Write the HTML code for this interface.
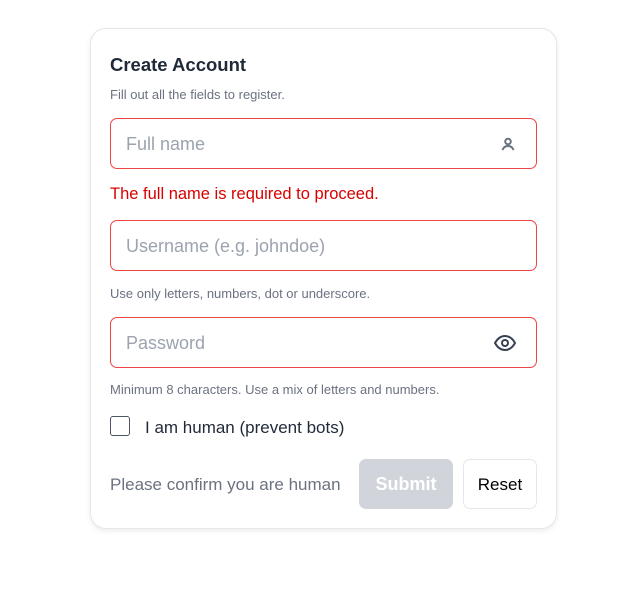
<!DOCTYPE html>
<html><head><style>
*{box-sizing:border-box;margin:0;padding:0}
body{width:619px;height:603px;background:#fff;font-family:"Liberation Sans",sans-serif;position:relative}
.card{position:absolute;left:90px;top:28px;width:467px;height:501px;border:1px solid #e5e7eb;border-radius:16px;box-shadow:0 2px 6px rgba(0,0,0,.08);background:#fff}
.a{position:absolute;white-space:nowrap}
.inp{position:absolute;left:19px;width:427px;height:51px;border:1px solid #ef4444;border-radius:7px}
.ph{position:absolute;left:15px;top:15px;font-size:18px;color:#9ca3af}
.hint{font-size:13px;color:#6b7280}
</style></head><body>
<div class="card">
<div class="a" style="left:19px;top:25px;font-size:18.5px;font-weight:bold;color:#1f2937">Create Account</div>
<div class="a hint" style="left:19px;top:58px">Fill out all the fields to register.</div>
<div class="inp" style="top:89px"><span class="ph">Full name</span>
<svg style="position:absolute;left:389px;top:17px" width="16" height="16" viewBox="0 0 16 16" fill="none" stroke="#6b7280" stroke-width="2"><circle cx="8" cy="5.5" r="2.8"/><path d="M2.5 14c1-3 3-4 5.5-4s4.5 1 5.5 4"/></svg></div>
<div class="a" style="left:19px;top:156px;font-size:16.5px;color:#d90000">The full name is required to proceed.</div>
<div class="inp" style="top:191px"><span class="ph">Username (e.g. johndoe)</span></div>
<div class="a hint" style="left:19px;top:257px">Use only letters, numbers, dot or underscore.</div>
<div class="inp" style="top:288px"><span class="ph">Password</span>
<svg style="position:absolute;left:382px;top:14px" width="24" height="22" viewBox="0 0 24 22" fill="none" stroke="#374151" stroke-width="2"><path d="M2 11c2.5-4.5 6-7 10-7s7.5 2.5 10 7c-2.5 4.5-6 7-10 7s-7.5-2.5-10-7z"/><circle cx="12" cy="11" r="3"/></svg></div>
<div class="a hint" style="left:19px;top:353px">Minimum 8 characters. Use a mix of letters and numbers.</div>
<div class="a" style="left:19px;top:387px;width:20px;height:20px;border:1.5px solid #4b5563;border-radius:3px"></div>
<div class="a" style="left:54px;top:389px;font-size:17px;color:#1f2937">I am human (prevent bots)</div>
<div class="a" style="left:19px;top:446px;font-size:17px;color:#6b7280">Please confirm you are human</div>
<div class="a" style="left:268px;top:430px;width:94px;height:50px;background:#d1d5db;border-radius:7px;color:#fff;font-weight:bold;font-size:18px;text-align:center;line-height:50px">Submit</div>
<div class="a" style="left:372px;top:430px;width:74px;height:50px;border:1px solid #e5e7eb;border-radius:7px;color:#000;font-size:17px;text-align:center;line-height:50px">Reset</div>
</div>
</body></html>
